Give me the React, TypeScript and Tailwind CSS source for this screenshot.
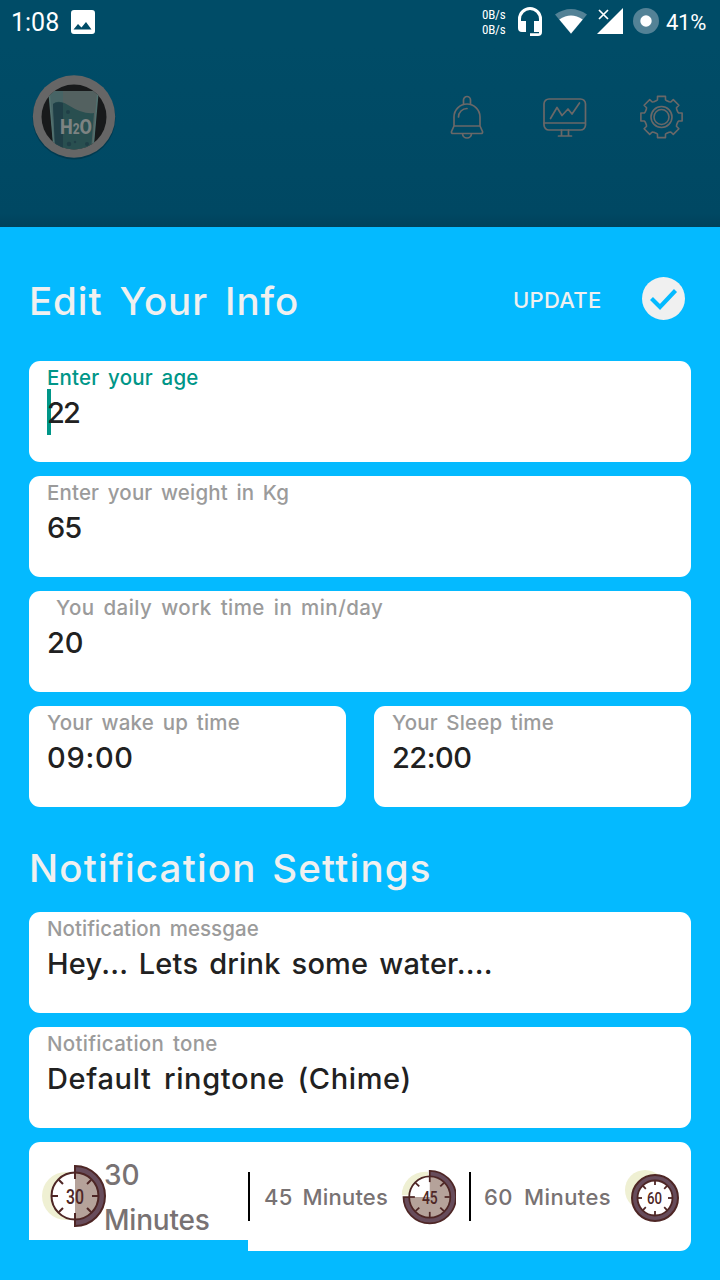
import React from "react";

const ui = "font-['Inter','Noto_Sans',sans-serif] whitespace-nowrap";

function StatusBar() {
  return (
    <div className="flex h-11 items-center pl-[11px] pr-[14px] text-white font-['Roboto',sans-serif]">
      <span className="w-[60px] text-[25px] leading-none">1:08</span>
      <svg className="-mt-px" width="24" height="24" viewBox="0 0 24 24">
        <path fill="#fff" fillRule="evenodd" d="M3 0h18a3 3 0 0 1 3 3v18a3 3 0 0 1-3 3H3a3 3 0 0 1-3-3V3a3 3 0 0 1 3-3zM2.500 19.500h18L15 12l-4.500 5.500L7 14z" />
      </svg>
      <div className="ml-auto flex w-[36px] flex-col font-['Roboto_Condensed','Roboto',sans-serif] text-[13px] leading-[15px] tracking-[-0.2px]">
        <span>0B/s</span>
        <span>0B/s</span>
      </div>
      <svg className="-mt-[2px] mr-[13px]" width="24" height="29" viewBox="0 0 24 29">
        <path fill="#fff" d="M12 0A12 12 0 0 0 0 12v9a4 4 0 0 0 4 4h4V14H3v-2a9 9 0 0 1 18 0v2h-5v11h5v1.300h-9V29h8a4 4 0 0 0 4-4V12A12 12 0 0 0 12 0z" />
      </svg>
      <svg className="-mt-[2px] mr-[10px]" width="32" height="26" viewBox="0 0 32 26">
        <path fill="#538296" d="M0 6.500Q16-4.500 32 6.500L16 26z" />
        <path fill="#fff" d="M4.300 11.500Q16 3.500 27.700 11.500L16 25.500z" />
      </svg>
      <svg className="-mt-[2px] mr-[10px]" width="26" height="26" viewBox="0 0 26 26">
        <path fill="#fff" d="M26 0v26H0z" />
        <path fill="#004b66" d="M0 0h13v12H0z" />
        <path d="M2 2l9 9M11 2l-9 9" stroke="#fff" strokeWidth="1.700" />
      </svg>
      <svg className="-mt-[2px] mr-[7px]" width="26" height="26" viewBox="0 0 26 26">
        <circle cx="13" cy="13" r="13" fill="#538296" />
        <circle cx="13" cy="13" r="5.700" fill="#fff" />
      </svg>
      <span className="w-10 pt-px text-[22px] leading-none tracking-[-0.3px]">41%</span>
    </div>
  );
}

function Logo() {
  return (
    <svg width="84" height="86" viewBox="0 0 84 86">
      <defs>
        <clipPath id="disc"><circle cx="42" cy="42" r="32.500" /></clipPath>
      </defs>
      <circle cx="42" cy="43" r="41.500" fill="#003a50" />
      <circle cx="42" cy="41.500" r="41.200" fill="#666" />
      <circle cx="42" cy="42" r="32.500" fill="#181a1b" />
      <g clipPath="url(#disc)">
        <path d="M17 16h49l-5 60H22z" fill="#536160" />
        <path d="M17 16h14v60H22z" fill="#476465" />
        <path d="M21 29q5-5 15 1 16 10 26 8l-3 38H24z" fill="#294f50" />
        <path d="M21 29q4-3 10-1v48h-8z" fill="#203f47" />
        <circle cx="36" cy="37" r="2" fill="#203f47" />
        <circle cx="37" cy="69" r="2.200" fill="#203f47" />
        <circle cx="43" cy="67" r="1.200" fill="#203f47" />
        <circle cx="55" cy="69" r="2" fill="#203f47" />
        <path d="M17 16l5 56M66 16l-5 56" stroke="#52716f" strokeWidth="1.600" />
      </g>
      <text x="28" y="59" fill="#7d8382" fontFamily="Roboto, sans-serif" fontWeight="800" fontSize="21" textLength="32" lengthAdjust="spacingAndGlyphs">H<tspan fontSize="14">2</tspan>O</text>
    </svg>
  );
}

function gearPath() {
  const pts: string[] = [];
  for (let i = 0; i < 8; i++) {
    const shape = [[-0.32, 17], [-0.23, 17.6], [-0.19, 21], [0.19, 21], [0.23, 17.6], [0.32, 17]];
    for (const [da, r] of shape) {
      const a = (i * Math.PI) / 4 + da;
      pts.push(`${(21.5 + r * Math.sin(a)).toFixed(2)} ${(22 - r * Math.cos(a)).toFixed(2)}`);
    }
  }
  return "M" + pts.join("L") + "Z";
}

function Header() {
  return (
    <header className="flex h-[227px] flex-col bg-linear-to-b from-[#004c67] from-20% via-[#004863] via-94% to-[#00425b]">
      <StatusBar />
      <div className="flex items-start pl-8 pr-9 pt-[31px]">
        <Logo />
        <div className="ml-auto mt-5 flex items-start">
          <svg className="mr-[59px]" width="34" height="45" viewBox="0 0 34 45" fill="none" stroke="#6a6868" strokeWidth="1.700" strokeLinecap="round" strokeLinejoin="round">
            <path d="M13.500 9.700V5a3.500 3.500 0 0 1 7 0v4.700M4 31V22a13 13 0 0 1 26 0v9M4 31h26l2.500 5.500q.5 2-1.500 2H3q-2 0-1.500-2zM12.500 38.500a4.500 4.500 0 0 0 9 0M8.500 22a8.500 8.500 0 0 1 8.500-8.500" />
          </svg>
          <svg className="mr-[53px]" width="44" height="45" viewBox="0 0 44 45" fill="none" stroke="#6a6868" strokeWidth="1.700" strokeLinecap="round" strokeLinejoin="round">
            <rect x="1" y="4" width="41.500" height="31" rx="5" />
            <path d="M1 28h41M18.500 35v5.500M25.500 35v5.500M15.500 41h13M7.500 23.500l6.500-11 5 8 6-6.500 4 5L36.500 8" />
          </svg>
          <svg width="44" height="44" viewBox="0 0 44 44" fill="none" stroke="#6a6868" strokeWidth="1.600" strokeLinejoin="round">
            <path d={gearPath()} />
            <circle cx="21.500" cy="22" r="10.500" />
            <circle cx="21.500" cy="22" r="7.500" />
          </svg>
        </div>
      </div>
    </header>
  );
}

type FieldProps = { label: string; value: string; labelCls?: string; valueCls?: string; focused?: boolean };

function Field({ label, value, labelCls = "text-[#9b9b9b] tracking-[0.3px]", valueCls = "", focused = false }: FieldProps) {
  return (
    <div className="flex h-[101px] min-w-0 flex-1 flex-col rounded-[11px] bg-white pl-[18px] pt-[5px]">
      <span className={`${ui} h-[23px] text-[20.5px] leading-[23px] font-[450] [word-spacing:3px] ${labelCls}`}>{label}</span>
      <div className="relative flex h-[46px] items-center">
        {focused && <span className="absolute left-0 top-0 h-[46px] w-1 bg-[#009688]" />}
        <span className={`${ui} relative text-[29px] font-medium leading-none text-[#212121] ${valueCls}`}>{value}</span>
      </div>
    </div>
  );
}

const INK = "#4e2625";

function Dial({ n, width, cx, ring, shade }: { n: string; width: number; cx: number; ring: React.ReactNode; shade?: React.ReactNode }) {
  return (
    <>
      {ring}
      <circle cx={cx} cy="32" r="23.500" fill="#fff" />
      {shade}
      <circle cx={cx} cy="32" r="23.500" fill="none" stroke={INK} strokeWidth="2" />
      {[0, 45, 90, 135, 180, 225, 270, 315].map((a) => (
        <path key={a} d={`M${cx} 9v6`} transform={`rotate(${a} ${cx} 32)`} stroke={INK} strokeWidth="2" />
      ))}
      <text x={cx} y="39.500" textAnchor="middle" fontFamily="Roboto, sans-serif" fontWeight="500" fontSize="20" textLength={width} lengthAdjust="spacingAndGlyphs" fill={INK}>{n}</text>
    </>
  );
}

function Intervals() {
  const opt = `${ui} text-[22px] leading-none font-[450] text-[#787273]`;
  return (
    <div className="flex h-[109px] items-start">
      <div className="flex h-[98px] w-[219px] items-start rounded-tl-[11px] bg-white pl-[11px]">
        <svg className="mt-[22px] shrink-0" width="66" height="64" viewBox="0 0 66 64">
          <Dial
            n="30"
            width={18}
            cx={35}
            ring={
              <>
                <circle cx="26" cy="32" r="24" fill="#eff0d3" />
                <path d="M35 2a30 30 0 0 1 0 60z" fill="#674c5b" stroke={INK} strokeWidth="2" />
              </>
            }
            shade={<path d="M35 8.500a23.500 23.500 0 0 1 0 47z" fill="#b5a29a" />}
          />
        </svg>
        <div className={`${ui} -ml-[2px] mt-[11px] flex flex-col text-[28px] leading-[45px] font-[450] text-[#787273]`}>
          <span>30</span>
          <span className="tracking-[-0.2px]">Minutes</span>
        </div>
      </div>
      <div className="flex h-[109px] flex-1 items-center rounded-r-[11px] bg-white">
        <span className="h-[49px] w-[2px] bg-black" />
        <span className={`${opt} ml-[14px] w-[136px] tracking-[0.2px] [word-spacing:4px]`}>45 Minutes</span>
        <svg width="56" height="56" viewBox="0 0 64 64">
          <Dial
            n="45"
            width={18}
            cx={34}
            ring={
              <>
                <path d="M29 3a27 27 0 0 0-27 27h30V3z" fill="#eff0d3" />
                <path d="M34 2a30 30 0 1 1-30 30h30z" fill="#674c5b" stroke={INK} strokeWidth="2" />
              </>
            }
            shade={<path d="M34 8.500a23.500 23.500 0 1 1-23.500 23.500h23.500z" fill="#b5a29a" />}
          />
        </svg>
        <span className="ml-[13px] h-[49px] w-[2px] bg-black" />
        <span className={`${opt} ml-[13px] w-[141px] tracking-[0.4px] [word-spacing:5px]`}>60 Minutes</span>
        <svg width="54" height="54" viewBox="0 0 54 54">
          <circle cx="20" cy="20" r="20" fill="#eff0d3" />
          <circle cx="30" cy="28" r="23" fill="#674c5b" stroke={INK} strokeWidth="2" />
          <circle cx="30" cy="28" r="17.500" fill="#fff" stroke={INK} strokeWidth="1.800" />
          {[0, 45, 90, 135, 180, 225, 270, 315].map((a) => (
            <path key={a} d="M30 11v4" transform={`rotate(${a} 30 28)`} stroke={INK} strokeWidth="1.800" />
          ))}
          <text x="29.500" y="34" textAnchor="middle" fontFamily="Roboto, sans-serif" fontWeight="500" fontSize="16" textLength="15" lengthAdjust="spacingAndGlyphs" fill={INK}>60</text>
        </svg>
      </div>
    </div>
  );
}

export default function App() {
  const heading = `${ui} text-[38.5px] leading-none font-[450] text-[#f0f0f0]`;
  return (
    <div className="flex h-[1280px] w-[720px] flex-col overflow-hidden bg-[#04baff]">
      <Header />
      <main className="flex flex-col px-[29px]">
        <div className="flex h-[134px] items-center pt-[9px]">
          <h1 className={`${heading} pt-[5px] tracking-[0.9px] [word-spacing:6px]`}>Edit Your Info</h1>
          <span className={`${ui} ml-auto w-[89px] pt-[3px] text-[22px] leading-none font-[450] tracking-[0.3px] text-[#f0f0f0]`}>UPDATE</span>
          <svg className="ml-10 mr-[6px]" width="43" height="43" viewBox="0 0 43 43">
            <circle cx="21.500" cy="21.500" r="21.500" fill="#f0f0f0" />
            <path d="M9.500 21.500l8.500 8.500L33.500 13.500" fill="none" stroke="#04baff" strokeWidth="4.200" />
          </svg>
        </div>
        <div className="flex flex-col gap-[14px]">
          <div className="flex"><Field label="Enter your age" value="22" labelCls="text-[#009688] tracking-[0.2px]" valueCls="tracking-[-1.8px]" focused /></div>
          <div className="flex"><Field label="Enter your weight in Kg" value="65" labelCls="text-[#9b9b9b] tracking-[0.15px]" valueCls="tracking-[-1px]" /></div>
          <div className="flex"><Field label="You daily work time in min/day" value="20" labelCls="pl-[9px] text-[#9b9b9b] tracking-[0.45px]" /></div>
          <div className="flex gap-7">
            <Field label="Your wake up time" value="09:00" labelCls="text-[#9b9b9b] tracking-[0.2px]" valueCls="tracking-[0.7px]" />
            <Field label="Your Sleep time" value="22:00" labelCls="text-[#9b9b9b] tracking-[0.15px]" valueCls="tracking-[-0.5px]" />
          </div>
        </div>
        <h2 className={`${heading} flex h-[105px] items-center pt-[18px] tracking-[1.2px] [word-spacing:4px]`}>Notification Settings</h2>
        <div className="flex flex-col gap-[14px]">
          <div className="flex"><Field label="Notification messgae" value="Hey... Lets drink some water...." labelCls="text-[#9b9b9b] tracking-[0.05px]" valueCls="tracking-[0.2px] [word-spacing:3px]" /></div>
          <div className="flex"><Field label="Notification tone" value="Default ringtone (Chime)" valueCls="tracking-[0.65px] [word-spacing:4px]" /></div>
          <Intervals />
        </div>
      </main>
    </div>
  );
}
